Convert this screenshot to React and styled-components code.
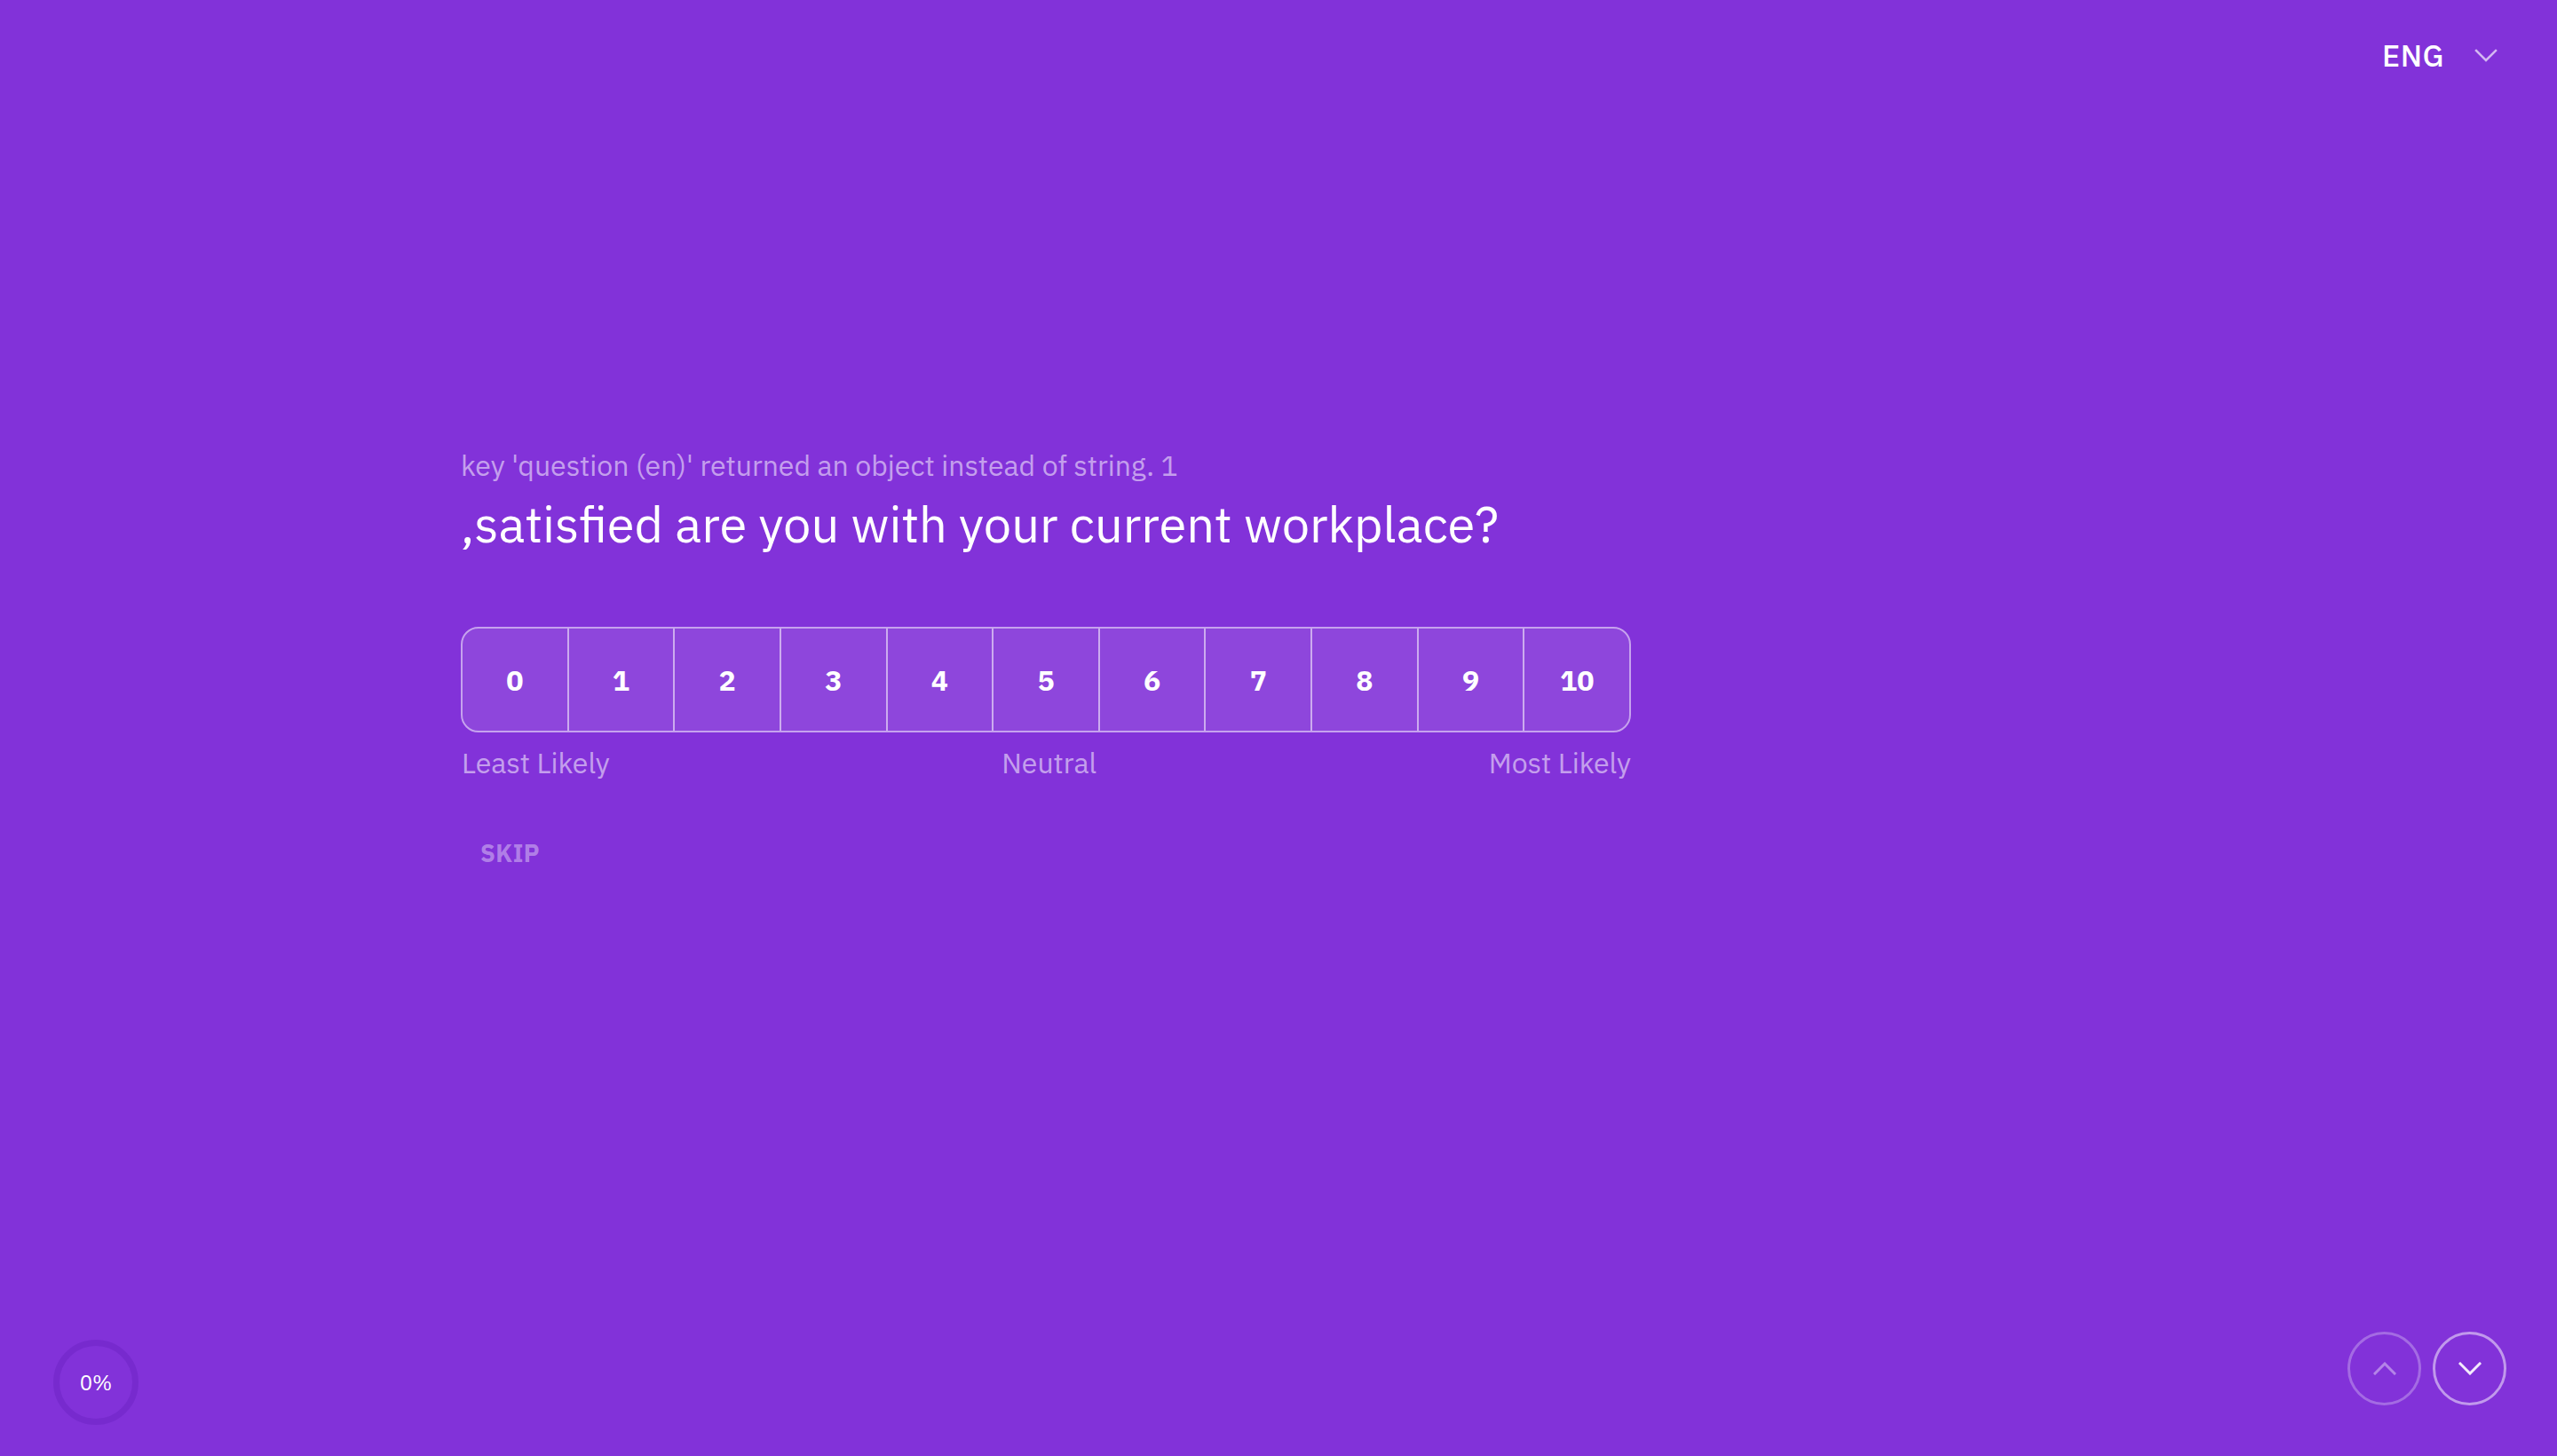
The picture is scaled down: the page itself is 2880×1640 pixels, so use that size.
import React from "react"
import styled, { createGlobalStyle } from "styled-components"

const GlobalStyle = createGlobalStyle`
  html, body {
    margin: 0;
    padding: 0;
    background: #8232d9;
  }
  body {
    font-family: "IBM Plex Sans", Roboto, "Liberation Sans", sans-serif;
    color: #fff;
  }
`

const Page = styled.div`
  width: 100%;
  height: 1640px;
  display: flex;
  flex-direction: column;
  background: #8232d9;
  overflow: hidden;
`

const Header = styled.header`
  display: flex;
  justify-content: flex-end;
  padding: 30px 67px 0 0;
  height: 94px;
  box-sizing: border-box;
`

const LangButton = styled.button`
  display: flex;
  align-items: center;
  gap: 34px;
  background: none;
  border: 0;
  padding: 0;
  color: #fff;
  font-family: inherit;
  font-size: 34px;
  font-weight: 500;
  letter-spacing: 0.5px;
  line-height: 1;
  cursor: pointer;
`

const Main = styled.main`
  flex: 1;
  padding: 410px 0 0 519px;
`

const Question = styled.section`
  width: 1318px;
`

const Hint = styled.p`
  margin: 0;
  font-size: 32px;
  line-height: 40px;
  color: rgba(255, 255, 255, 0.55);
`

const Title = styled.h1`
  margin: 10px 0 0;
  font-size: 56px;
  font-weight: 400;
  line-height: 72px;
  color: #fff;
`

const Scale = styled.div`
  display: flex;
  margin-top: 80px;
  height: 119px;
  border: 2px solid rgba(255, 255, 255, 0.55);
  border-radius: 20px;
  overflow: hidden;
  box-sizing: border-box;
`

const Cell = styled.button`
  flex: 1;
  display: flex;
  align-items: center;
  justify-content: center;
  background: rgba(255, 255, 255, 0.1);
  border: 0;
  border-left: ${p => (p.first ? "0" : "2px solid rgba(255, 255, 255, 0.55)")};
  color: #fff;
  font-family: inherit;
  font-size: 32px;
  font-weight: 700;
  padding: 0;
  cursor: pointer;
`

const Labels = styled.div`
  display: flex;
  justify-content: space-between;
  margin-top: 14px;
  padding: 0 0 0 1px;
  font-size: 32px;
  line-height: 40px;
  color: rgba(255, 255, 255, 0.55);
`

const Skip = styled.button`
  margin: 64px 0 0 22px;
  background: none;
  border: 0;
  padding: 0;
  font-family: inherit;
  font-size: 27px;
  font-weight: 700;
  letter-spacing: 0.5px;
  color: rgba(255, 255, 255, 0.4);
  cursor: pointer;
`

const Footer = styled.footer`
  display: flex;
  justify-content: space-between;
  align-items: flex-end;
  padding: 0 57px 0 60px;
`

const Progress = styled.div`
  width: 96px;
  height: 96px;
  box-sizing: border-box;
  border: 7px solid rgba(60, 0, 140, 0.14);
  border-radius: 50%;
  display: flex;
  align-items: center;
  justify-content: center;
  margin-bottom: 35px;
  font-size: 24px;
  color: #fff;
`

const Nav = styled.div`
  display: flex;
  gap: 13px;
  margin-bottom: 57px;
`

const NavButton = styled.button`
  width: 83px;
  height: 83px;
  border-radius: 50%;
  box-sizing: border-box;
  border: 3px solid ${p => (p.active ? "rgba(255,255,255,0.5)" : "rgba(255,255,255,0.28)")};
  background: none;
  display: flex;
  align-items: center;
  justify-content: center;
  padding: 0;
  color: ${p => (p.active ? "rgba(255,255,255,0.9)" : "rgba(255,255,255,0.4)")};
  cursor: pointer;
`

const Chevron = ({ up, width = 26, stroke = 3 }) => (
  <svg width={width} height={width / 2 + 2} viewBox="0 0 26 15" fill="none">
    <path
      d={up ? "M2 13 L13 2 L24 13" : "M2 2 L13 13 L24 2"}
      stroke="currentColor"
      strokeWidth={stroke}
      strokeLinecap="square"
    />
  </svg>
)

const LangChevron = styled.span`
  display: flex;
  color: rgba(255, 255, 255, 0.65);
`

const values = [0, 1, 2, 3, 4, 5, 6, 7, 8, 9, 10]

export default function App() {
  return (
    <>
      <GlobalStyle />
      <Page>
        <Header>
          <LangButton>
            ENG
            <LangChevron>
              <Chevron stroke={2.5} />
            </LangChevron>
          </LangButton>
        </Header>
        <Main>
          <Question>
            <Hint>key 'question (en)' returned an object instead of string. 1</Hint>
            <Title>,satisfied are you with your current workplace?</Title>
            <Scale>
              {values.map(v => (
                <Cell key={v} first={v === 0}>
                  {v}
                </Cell>
              ))}
            </Scale>
            <Labels>
              <span>Least Likely</span>
              <span>Neutral</span>
              <span>Most Likely</span>
            </Labels>
            <Skip>SKIP</Skip>
          </Question>
        </Main>
        <Footer>
          <Progress>0%</Progress>
          <Nav>
            <NavButton>
              <Chevron up />
            </NavButton>
            <NavButton active>
              <Chevron />
            </NavButton>
          </Nav>
        </Footer>
      </Page>
    </>
  )
}
